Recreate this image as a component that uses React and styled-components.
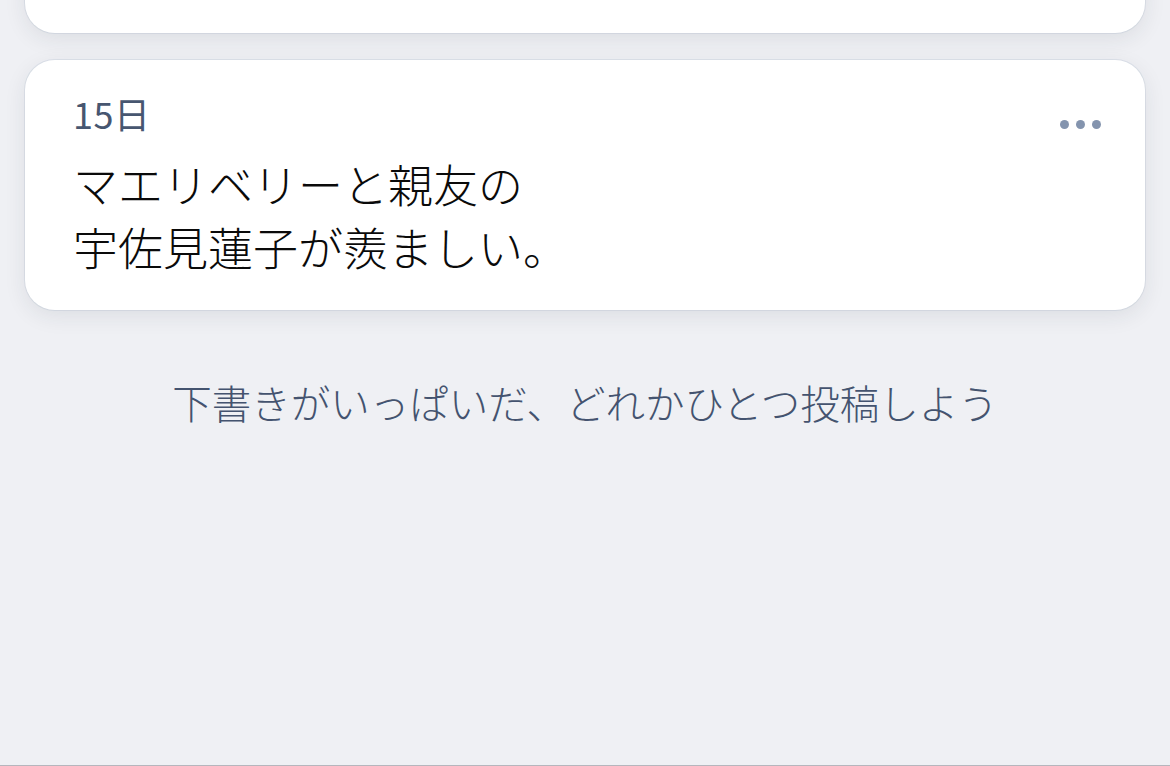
import React from "react";
import styled, { createGlobalStyle } from "styled-components";

const GlobalStyle = createGlobalStyle`
  html, body {
    margin: 0;
    padding: 0;
    background: #eff0f4;
  }
  body {
    font-family: "Noto Sans CJK JP", "Noto Sans", sans-serif;
    -webkit-font-smoothing: antialiased;
  }
`;

const Page = styled.div`
  height: 100vh;
  box-sizing: border-box;
  overflow: hidden;
  background: #eff0f4;
  border-bottom: 1px solid #b6b6bd;
  display: flex;
  flex-direction: column;
`;

const List = styled.div`
  display: flex;
  flex-direction: column;
  gap: 27px;
  padding: 0 25px;
`;

const Card = styled.div`
  position: relative;
  background: #ffffff;
  border-radius: 30px;
  box-shadow: 0 6px 22px rgba(30, 40, 60, 0.09), 0 0 0 1px rgba(210, 216, 226, 0.6);
  padding: 30px 48px 32px 48px;
  ${(p) => p.$cut && `height: 120px; margin-top: -87px; box-sizing: border-box;`}
`;

const DateLabel = styled.div`
  font-size: 36px;
  line-height: 46px;
  color: #475670;
  letter-spacing: 0.5px;
`;

const Body = styled.p`
  margin: 16px 0 0 0;
  font-size: 45px;
  font-weight: 300;
  line-height: 63px;
  color: #0a0a0a;
`;

const More = styled.button`
  position: absolute;
  top: 60px;
  right: 44px;
  display: flex;
  gap: 7px;
  padding: 0;
  border: none;
  background: none;
  span {
    width: 9px;
    height: 9px;
    border-radius: 50%;
    background: #8494ae;
  }
`;

const Hint = styled.div`
  margin-top: 66px;
  text-align: center;
  font-size: 39.5px;
  font-weight: 300;
  line-height: 52px;
  color: #44536f;
`;

export default function App() {
  return (
    <Page>
      <GlobalStyle />
      <List>
        <Card $cut />
        <Card>
          <DateLabel>15日</DateLabel>
          <Body>
            マエリベリーと親友の
            <br />
            宇佐見蓮子が羨ましい。
          </Body>
          <More aria-label="more">
            <span />
            <span />
            <span />
          </More>
        </Card>
      </List>
      <Hint>下書きがいっぱいだ、どれかひとつ投稿しよう</Hint>
    </Page>
  );
}
